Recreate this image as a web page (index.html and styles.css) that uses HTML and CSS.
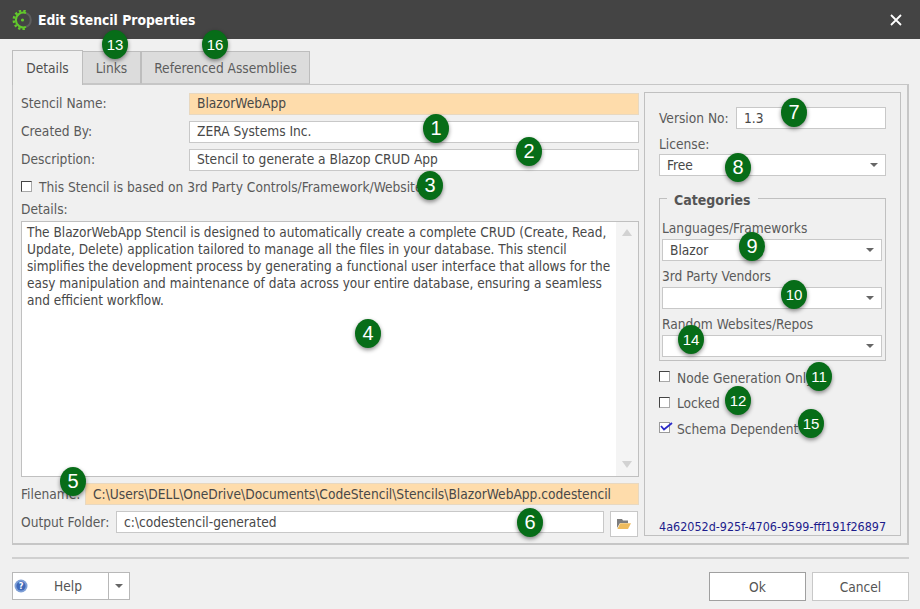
FILE: index.html
```html
<!DOCTYPE html>
<html lang="en">
<head>
<meta charset="utf-8">
<title>Edit Stencil Properties</title>
<link rel="stylesheet" href="styles.css">
</head>
<body>
<div class="dialog">
  <header class="titlebar">
    <svg class="logo" width="20" height="20" viewBox="0 0 20 20">
      <path d="M14 3.1A7.4 7.4 0 0 1 14 16.9" fill="none" stroke="#5e5e5e" stroke-width="2"/>
      <path d="M14 3.1A7.4 7.4 0 1 0 14 16.9" fill="none" stroke="#62c82c" stroke-width="2"/>
      <path d="M13.6 1.2A9.2 9.2 0 1 0 13.6 18.8" fill="none" stroke="#62c82c" stroke-width="2.4" stroke-dasharray="2.4 2"/>
      <circle cx="10.5" cy="10" r="1.6" fill="#62c82c"/>
    </svg>
    <span class="title">Edit Stencil Properties</span>
    <svg class="close" width="12" height="12" viewBox="0 0 12 12"><path d="M1 1 11 11M11 1 1 11" stroke="#fff" stroke-width="1.8"/></svg>
  </header>

  <main class="content">
    <nav class="tabs">
      <div class="tab active">Details</div>
      <div class="tab links">Links</div>
      <div class="tab refs">Referenced Assemblies</div>
    </nav>
    <section class="panel">
      <div class="left">
        <div class="row"><label class="lbl">Stencil Name:</label><div class="field req">BlazorWebApp</div></div>
        <div class="row"><label class="lbl">Created By:</label><div class="field">ZERA Systems Inc.</div></div>
        <div class="row"><label class="lbl">Description:</label><div class="field">Stencil to generate a Blazop CRUD App</div></div>
        <div class="check third"><span class="box"></span><span>This Stencil is based on 3rd Party Controls/Framework/Website</span></div>
        <div class="details-label">Details:</div>
        <div class="memo">
          <div class="memo-text">The BlazorWebApp Stencil is designed to automatically create a complete CRUD (Create, Read, Update, Delete) application tailored to manage all the files in your database. This stencil simplifies the development process by generating a functional user interface that allows for the easy manipulation and maintenance of data across your entire database, ensuring a seamless and efficient workflow.</div>
          <div class="scroll"><span class="up"></span><span class="down"></span></div>
        </div>
        <div class="file-row"><label class="lbl">Filename:</label><div class="field req">C:\Users\DELL\OneDrive\Documents\CodeStencil\Stencils\BlazorWebApp.codestencil</div></div>
        <div class="out-row">
          <label class="lbl">Output Folder:</label>
          <div class="field">c:\codestencil-generated</div>
          <div class="browse">
            <svg width="14" height="12" viewBox="0 0 14 12"><path d="M0 1h5l1 1.5h5V5H3L0 10z" fill="#7d7d7d"/><path d="M3.2 5.2H14L11 11H.4z" fill="#eebc5e"/></svg>
          </div>
        </div>
      </div>

      <aside class="right">
        <div class="ver-row"><label class="lbl">Version No:</label><div class="field">1.3</div></div>
        <div class="lbl lic">License:</div>
        <div class="field combo">Free<span class="caret"></span></div>
        <fieldset class="cats">
          <legend>Categories</legend>
          <div class="lbl">Languages/Frameworks</div>
          <div class="field combo">Blazor<span class="caret"></span></div>
          <div class="lbl">3rd Party Vendors</div>
          <div class="field combo"><span class="caret"></span></div>
          <div class="lbl">Random Websites/Repos</div>
          <div class="field combo"><span class="caret"></span></div>
        </fieldset>
        <div class="checks">
          <div class="check"><span class="box"></span><span>Node Generation Only</span></div>
          <div class="check"><span class="box"></span><span>Locked</span></div>
          <div class="check">
            <svg class="tick" width="14" height="13" viewBox="0 0 14 13"><rect x=".5" y="1.5" width="10" height="10" fill="#fff" stroke="#9a9a9a"/><path d="M2 5 5 8.5 13 2" fill="none" stroke="#2a2ac8" stroke-width="1.8"/></svg>
            <span>Schema Dependent</span>
          </div>
        </div>
        <div class="guid">4a62052d-925f-4706-9599-fff191f26897</div>
      </aside>
    </section>
    <hr class="sep">
    <footer class="actions">
      <div class="help">
        <svg class="help-ic" width="14" height="14" viewBox="0 0 14 14"><circle cx="7" cy="7" r="6.5" fill="#7e9fd6"/><circle cx="7" cy="7" r="4.6" fill="#3f68b8"/><text x="7" y="10" text-anchor="middle" class="q">?</text></svg>
        <span class="help-txt">Help</span>
        <span class="help-drop"><span class="caret"></span></span>
      </div>
      <div class="btn ok">Ok</div>
      <div class="btn">Cancel</div>
    </footer>
  </main>

  <span class="badge b13">13</span>
  <span class="badge b16">16</span>
  <span class="badge b1">1</span>
  <span class="badge b2">2</span>
  <span class="badge b3">3</span>
  <span class="badge b4">4</span>
  <span class="badge b5">5</span>
  <span class="badge b6">6</span>
  <span class="badge b7">7</span>
  <span class="badge b8">8</span>
  <span class="badge b9">9</span>
  <span class="badge b10">10</span>
  <span class="badge b14">14</span>
  <span class="badge b11">11</span>
  <span class="badge b12">12</span>
  <span class="badge b15">15</span>
</div>
</body>
</html>
```
FILE: styles.css
```css
* { box-sizing: border-box; }
html, body { margin: 0; padding: 0; }
body { font-family: "DejaVu Sans", "Noto Sans", sans-serif; font-stretch: condensed; font-size: 13.65px; color: #555; background: #f0f0f0; }

.dialog { position: relative; width: 920px; height: 609px; overflow: hidden; background: #f0f0f0; display: flex; flex-direction: column; }

.titlebar { height: 39px; flex: none; background: #444; display: flex; align-items: center; padding: 0 18px 0 12px; }
.logo { flex: none; }
.title { margin-left: 6px; color: #fff; font-weight: 700; font-size: 13.8px; }
.close { margin-left: auto; }

.content { flex: 1; padding: 11px 11px 0 12px; display: flex; flex-direction: column; }

.tabs { display: flex; height: 34px; flex: none; position: relative; z-index: 1; }
.tab { display: flex; align-items: center; justify-content: center; border: 1px solid #bdbdbd; border-bottom: 1px solid #c6c6c6; background: #dcdcdc; color: #5c5c5c; height: 33px; margin-top: 1px; }
.tab.active { width: 71px; height: 35px; margin-top: 0; background: #f0f0f0; border-bottom: 0; color: #4e4e4e; }
.tab.links { width: 58px; border-left: 0; }
.tab.refs { width: 169px; border-left: 1px solid #bdbdbd; }

.panel { height: 461px; flex: none; border: 1px solid #c6c6c6; border-width: 1px 2px 2px 1px; padding: 8px 8px 7px 8px; display: flex; gap: 5px; }

.left { width: 618px; flex: none; display: flex; flex-direction: column; }
.left > * { flex: none; }
.row { display: grid; grid-template-columns: 168px 1fr; align-items: center; height: 22px; margin-bottom: 6px; }
.row .lbl, .row .field { padding-bottom: 2px; }
.field { height: 22px; border: 1px solid #c8c8c8; background: #fff; padding: 0 7px; display: flex; align-items: center; color: #484848; white-space: nowrap; overflow: hidden; }
.field.req { background: #fedcab; border-color: #e8d8c0; }
.lbl { color: #5a5a5a; white-space: nowrap; }

.check { display: flex; align-items: center; gap: 7px; color: #5a5a5a; white-space: nowrap; }
.box { width: 11px; height: 11px; flex: none; margin-top: -2px; background: #fff; border: 1px solid #a8a8a8; border-top-color: #444; border-left-color: #444; }
.third { height: 20px; }

.details-label { margin-top: 3px; height: 21px; line-height: 18px; color: #5a5a5a; }
.memo { height: 256px; display: flex; background: #fff; border: 1px solid #c0c0c0; }
.memo-text { flex: 1; padding: 2px 0 0 5px; font-size: 13.5px; line-height: 17px; color: #484848; }
.scroll { width: 22px; flex: none; background: #f4f4f4; display: flex; flex-direction: column; justify-content: space-between; align-items: center; padding: 7px 0 8px; }
.up { width: 0; height: 0; border: 5px solid transparent; border-top: 0; border-bottom: 7px solid #d2d2d2; }
.down { width: 0; height: 0; border: 5px solid transparent; border-bottom: 0; border-top: 7px solid #d2d2d2; }

.file-row { display: grid; grid-template-columns: 64px 1fr; align-items: center; height: 22px; margin-top: 6px; }
.out-row { display: grid; grid-template-columns: 95px 488px 34px; align-items: start; margin-top: 6px; }
.out-row .lbl { line-height: 22px; }
.browse { width: 28px; height: 26px; margin-left: 6px; border: 1px solid #c8c8c8; background: #fff; display: flex; align-items: center; justify-content: center; }

.right { width: 257px; flex: none; margin-top: -1px; border: 1px solid #c0c0c0; padding: 14px 14px 0 14px; display: flex; flex-direction: column; }
.ver-row { display: grid; grid-template-columns: 77px 1fr; align-items: center; }
.lic { margin-top: 5px; height: 20px; line-height: 20px; }
.combo { position: relative; }
.caret { width: 0; height: 0; border: 4px solid transparent; border-bottom: 0; border-top: 4px solid #666; }
.combo .caret { position: absolute; right: 7px; top: 8px; }

.cats { margin: 12px 0 0; padding: 10px 3px 3px 2px; border: 1px solid #c0c0c0; min-width: 0; height: 173px; }
.cats legend { font-weight: 700; font-size: 14px; padding: 4px 7px 0; margin-left: 5px; color: #555; }
.cats .lbl { height: 22px; line-height: 22px; margin-top: -1px; }
.cats .field { margin-bottom: 5px; }

.checks { display: flex; flex-direction: column; margin-top: 4px; }
.checks .check { height: 25.5px; }
.tick { flex: none; margin-right: -3px; margin-top: -2px; }

.guid { margin-top: auto; margin-bottom: 1px; text-align: right; color: #1c1c8c; font-size: 12.45px; white-space: nowrap; }

.sep { margin: 12px 0 0; height: 2px; border: 0; background: #d0d0d0; flex: none; }

.actions { display: flex; align-items: flex-start; margin-top: 13px; gap: 6px; }
.help { width: 118px; height: 28px; border: 1px solid #b8b8b8; background: #fff; display: flex; align-items: center; margin-right: auto; }
.help-ic { margin-left: 1px; flex: none; }
.q { fill: #fff; font-size: 9px; font-weight: 700; }
.help-txt { flex: 1; text-align: center; color: #555; }
.help-drop { width: 21px; height: 100%; border-left: 1px solid #b8b8b8; display: flex; align-items: center; justify-content: center; flex: none; }
.btn { width: 97px; height: 29px; background: #fff; border: 1px solid #c8c8c8; display: flex; align-items: center; justify-content: center; color: #555; }
.btn.ok { border-color: #a0a0a0; }

.badge { position: absolute; z-index: 2; width: 26px; height: 29px; border-radius: 50%; background: #076d18; color: #fff; font-family: "Liberation Sans", Arial, sans-serif; font-stretch: normal; font-size: 15px; display: flex; align-items: center; justify-content: center; box-shadow: 0 2px 4px rgba(0,0,0,.45); }
.b1, .b2, .b3, .b4, .b5, .b6, .b7, .b8, .b9 { font-size: 20px; }
.b13 { left: 102px; top: 30px; }
.b16 { left: 202px; top: 30px; }
.b1 { left: 423px; top: 114px; }
.b2 { left: 516px; top: 137px; }
.b3 { left: 417px; top: 171px; }
.b4 { left: 355px; top: 319px; }
.b5 { left: 60px; top: 467px; }
.b6 { left: 517px; top: 508px; }
.b7 { left: 781px; top: 98px; }
.b8 { left: 725px; top: 153px; }
.b9 { left: 739px; top: 232px; }
.b10 { left: 781px; top: 280px; }
.b14 { left: 678px; top: 325px; }
.b11 { left: 806px; top: 362px; }
.b12 { left: 725px; top: 386px; }
.b15 { left: 798px; top: 409px; }
```
